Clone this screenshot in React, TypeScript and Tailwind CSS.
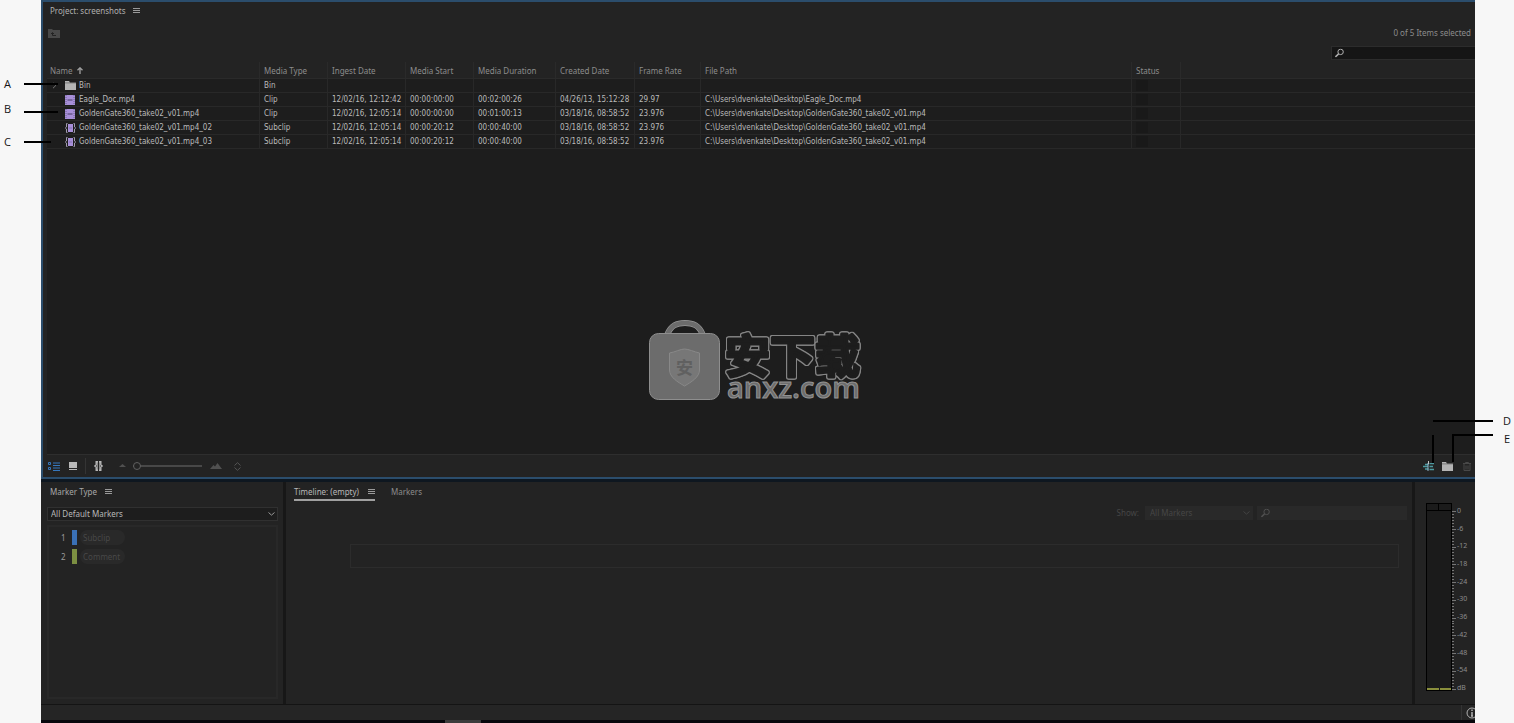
import type { ReactNode } from "react";
import clsx from "clsx";

type Kind = "bin" | "clip" | "subclip";

type Item = {
  kind: Kind;
  name: string;
  type: string;
  ingest?: string;
  start?: string;
  duration?: string;
  created?: string;
  rate?: string;
  path?: string;
};

const GATE_PATH = "C:\\Users\\dvenkate\\Desktop\\GoldenGate360_take02_v01.mp4";

const ITEMS: Item[] = [
  { kind: "bin", name: "Bin", type: "Bin" },
  { kind: "clip", name: "Eagle_Doc.mp4", type: "Clip", ingest: "12/02/16, 12:12:42", start: "00:00:00:00", duration: "00:02:00:26", created: "04/26/13, 15:12:28", rate: "29.97", path: "C:\\Users\\dvenkate\\Desktop\\Eagle_Doc.mp4" },
  { kind: "clip", name: "GoldenGate360_take02_v01.mp4", type: "Clip", ingest: "12/02/16, 12:05:14", start: "00:00:00:00", duration: "00:01:00:13", created: "03/18/16, 08:58:52", rate: "23.976", path: GATE_PATH },
  { kind: "subclip", name: "GoldenGate360_take02_v01.mp4_02", type: "Subclip", ingest: "12/02/16, 12:05:14", start: "00:00:20:12", duration: "00:00:40:00", created: "03/18/16, 08:58:52", rate: "23.976", path: GATE_PATH },
  { kind: "subclip", name: "GoldenGate360_take02_v01.mp4_03", type: "Subclip", ingest: "12/02/16, 12:05:14", start: "00:00:20:12", duration: "00:00:40:00", created: "03/18/16, 08:58:52", rate: "23.976", path: GATE_PATH },
];

const COLUMNS = ["Media Type", "Ingest Date", "Media Start", "Media Duration", "Created Date", "Frame Rate", "File Path", "Status"];

const LEVELS = ["0", "-6", "-12", "-18", "-24", "-30", "-36", "-42", "-48", "-54", "dB"];

const CELL = "h-[14px] border-b border-r border-[#282828] pl-1 whitespace-nowrap";

function MenuIcon() {
  return (
    <svg width="7" height="6" viewBox="0 0 7 6" stroke="#9a9a9a" shapeRendering="crispEdges">
      <path d="M0 .5h7M0 2.5h7M0 4.5h7" />
    </svg>
  );
}

function SearchIcon({ color }: { color: string }) {
  return (
    <svg width="9" height="9" viewBox="0 0 9 9" fill="none" stroke={color} className="pointer-events-none absolute left-1 top-1/2 -translate-y-1/2">
      <circle cx="5.6" cy="3.4" r="2.7" />
      <path d="M3.6 5.4.4 8.4" strokeWidth="1.5" />
    </svg>
  );
}

function ChevronIcon({ color }: { color: string }) {
  return (
    <svg width="7" height="5" viewBox="0 0 7 5" fill="none" stroke={color} className="pointer-events-none absolute right-[3px] top-1/2 -translate-y-1/2">
      <path d="m.5 1 3 2.6L6.5 1" />
    </svg>
  );
}

function FolderIcon({ color = "#b4b4b4" }: { color?: string }) {
  return (
    <svg width="11" height="9" viewBox="0 0 11 9" fill={color}>
      <path d="M0 0h4l1 1.5h6V9H0z" />
      <path d="M0 1.9h11" stroke="#1d1d1d" strokeWidth=".4" />
    </svg>
  );
}

function KindIcon({ kind }: { kind: Kind }) {
  if (kind === "bin") return <FolderIcon />;
  if (kind === "clip") {
    return (
      <svg width="10" height="10" viewBox="0 0 10 10">
        <path fill="#a78fd8" d="M0 0h10v10H0z" />
        <path stroke="#4b3f68" d="M2.5 5h5" />
        <path stroke="#6f5f96" strokeDasharray="1 1" d="M1 0v10M9 0v10" />
      </svg>
    );
  }
  return (
    <svg width="11" height="10" viewBox="0 0 11 10" fill="none">
      <path fill="#a78fd8" d="M3 1h5v8H3z" />
      <path stroke="#7a68a4" strokeWidth=".8" d="M4 5h3" />
      <path stroke="#a09aae" d="M2.5.5h-1V4L.3 5l1.2 1v3.5h1M8.5.5h1V4l1.2 1-1.2 1v3.5h-1" />
    </svg>
  );
}

function IconButton({ label, className, children }: { label: string; className?: string; children: ReactNode }) {
  return (
    <button type="button" aria-label={label} className={clsx("flex h-4 shrink-0 items-center justify-center", className)}>
      {children}
    </button>
  );
}

function ItemTable() {
  return (
    <table className="w-full table-fixed border-separate border-spacing-0 text-left leading-[13px]">
      <colgroup>
        <col className="w-[213px]" />
        <col className="w-[68px]" />
        <col className="w-[78px]" />
        <col className="w-[68px]" />
        <col className="w-[82px]" />
        <col className="w-[79px]" />
        <col className="w-[66px]" />
        <col className="w-[431px]" />
        <col className="w-[49px]" />
        <col />
      </colgroup>
      <thead className="bg-[#232323] font-['Noto_Sans',sans-serif] text-[#8c8c8c]">
        <tr>
          <th className="h-[17px] border-b border-r border-[#2a2a2a] pl-[3px] font-normal">
            <span className="flex items-center gap-1">
              Name
              <svg width="6" height="7" viewBox="0 0 6 7" fill="none" stroke="#a0a0a0" strokeWidth="1.3">
                <path d="M3 7V1M.5 3.2 3 .8l2.5 2.4" />
              </svg>
            </span>
          </th>
          {COLUMNS.map((c) => (
            <th key={c} className="h-[17px] border-b border-r border-[#2a2a2a] pl-1 font-normal whitespace-nowrap">{c}</th>
          ))}
          <th className="border-b border-[#2a2a2a]" />
        </tr>
      </thead>
      <tbody className="font-['DejaVu_Sans_Condensed','Noto_Sans',sans-serif] text-[#bababa]">
        {ITEMS.map((item) => (
          <tr key={item.name}>
            <td className={CELL}>
              <div className="flex items-center">
                <span className="w-[14px]">
                  {item.kind === "bin" && (
                    <svg width="5" height="7" viewBox="0 0 5 7" fill="none" stroke="#777" className="ml-px">
                      <path d="m1 .8 2.8 2.7L1 6.2" />
                    </svg>
                  )}
                </span>
                <span className="flex w-[14px] items-center">
                  <KindIcon kind={item.kind} />
                </span>
                {item.name}
              </div>
            </td>
            <td className={CELL}>{item.type}</td>
            <td className={CELL}>{item.ingest}</td>
            <td className={CELL}>{item.start}</td>
            <td className={CELL}>{item.duration}</td>
            <td className={CELL}>{item.created}</td>
            <td className={CELL}>{item.rate}</td>
            <td className={CELL}>{item.path}</td>
            <td className={CELL}>
              <div className="h-[11px] w-3 bg-[#191919]" />
            </td>
            <td className="border-b border-[#282828]" />
          </tr>
        ))}
      </tbody>
    </table>
  );
}

function Toolbar() {
  return (
    <div className="flex h-[22px] items-center pl-[5px]">
      <IconButton label="List view" className="w-3">
        <svg width="12" height="9" viewBox="0 0 12 9" fill="none" stroke="#3577bd">
          <path d="M.5.5h2v2h-2zM.5 5.5h2v2h-2z" />
          <path d="M5 1h7M5 3.5h7M5 6h7M5 8.5h7" />
        </svg>
      </IconButton>
      <IconButton label="Icon view" className="ml-[9px] w-2">
        <svg width="8" height="8" viewBox="0 0 8 8" fill="#b8b8b8">
          <path d="M0 0h8v6H0zM0 7h8v1H0z" />
        </svg>
      </IconButton>
      <span className="ml-2 h-4 w-px bg-[#343434]" />
      <IconButton label="Scrub" className="ml-2 w-[9px]">
        <svg width="9" height="10" viewBox="0 0 9 10" fill="none" stroke="#b8b8b8">
          <path strokeWidth="1.4" d="M3.9.7H2.2V4L.7 5l1.5 1v3.3h1.7M5.1.7h1.7V4l1.5 1-1.5 1v3.3H5.1" />
          <path d="M3.5 0v10M5.5 0v10" strokeWidth=".7" />
        </svg>
      </IconButton>
      <IconButton label="Smaller" className="ml-4 w-[7px]">
        <svg width="7" height="4" viewBox="0 0 7 4" fill="#505050"><path d="M0 3 3.5 0 7 3z" /></svg>
      </IconButton>
      <input
        type="range"
        aria-label="Thumbnail size"
        min={0}
        max={100}
        defaultValue={0}
        className="ml-[7px] h-2 w-[69px] appearance-none bg-transparent [&::-webkit-slider-runnable-track]:h-2 [&::-webkit-slider-runnable-track]:bg-[linear-gradient(#484848,#484848)] [&::-webkit-slider-runnable-track]:bg-[length:100%_2px] [&::-webkit-slider-runnable-track]:bg-center [&::-webkit-slider-runnable-track]:bg-no-repeat [&::-webkit-slider-thumb]:size-2 [&::-webkit-slider-thumb]:appearance-none [&::-webkit-slider-thumb]:rounded-full [&::-webkit-slider-thumb]:border [&::-webkit-slider-thumb]:border-[#606060] [&::-webkit-slider-thumb]:bg-[#232323]"
      />
      <IconButton label="Larger" className="ml-2 w-3">
        <svg width="12" height="6" viewBox="0 0 12 6" fill="#505050"><path d="m0 6 3.500-4 1.500 1.500L7.500 0 12 6z" /></svg>
      </IconButton>
      <IconButton label="Sort" className="ml-3 w-[7px]">
        <svg width="7" height="9" viewBox="0 0 7 9" fill="none" stroke="#555"><path d="M.5 3.500 3.500.7l3 2.800M.5 5.500l3 2.800 3-2.800" /></svg>
      </IconButton>

      <div className="ml-auto flex items-center">
        <IconButton label="Create subclip" className="w-3">
          <svg width="12" height="11" viewBox="0 0 12 11" fill="none">
            <path stroke="#4e9aa0" strokeWidth="1.300" d="M2 3.500h3.500M0 5.500h5M2 8h3.500M6.500 2.700H11M6.500 5.500H10M6.500 8.500H11" />
            <path stroke="#8fb3c8" d="M5 2v8" />
            <path stroke="#c4c4c4" d="M5.500 0v3" />
          </svg>
        </IconButton>
        <IconButton label="New bin" className="ml-[7px] w-[11px]"><FolderIcon /></IconButton>
        <IconButton label="Delete" className="mr-1 ml-[10px] w-2">
          <svg width="8" height="9" viewBox="0 0 8 9" fill="none" stroke="#484848">
            <path d="M0 1.500h8M2.500 1.500v-1h3v1M1 2v6.500h6V2M3 3.500v4M5 3.500v4" />
          </svg>
        </IconButton>
      </div>
    </div>
  );
}

function ProjectPanel() {
  return (
    <section className="flex flex-1 flex-col border-t-2 border-b-2 border-l-2 border-[#2b4d6c] bg-[#232323]">
      <header className="flex h-[18px] items-center gap-2 pl-[7px] text-[#b0b0b0]">
        <h1>Project: screenshots</h1>
        <IconButton label="Panel menu"><MenuIcon /></IconButton>
      </header>
      <div className="flex h-[26px] items-center justify-between pr-1 pl-[5px] text-[#8c8c8c]">
        <IconButton label="Parent bin">
          <svg width="12" height="9" viewBox="0 0 12 9" fill="none">
            <path fill="#494949" d="M0 0h4l1 1h7v8H0z" />
            <path stroke="#232323" d="M4.500 6.500V4M3 5l1.500-1.500L6 5M4.500 6.500H8" />
          </svg>
        </IconButton>
        <span>0 of 5 Items selected</span>
      </div>
      <div className="relative mb-0.5 h-[14px] w-[144px] self-end">
        <input type="search" aria-label="Search project" className="block h-full w-full border border-r-0 border-[#2c2c2c] bg-[#151515] pl-4 text-[#b0b0b0] outline-none" />
        <SearchIcon color="#b0b0b0" />
      </div>
      <div className="ml-1 flex-1 border-b border-[#2e2e2e] bg-[#1d1d1d]">
        <ItemTable />
      </div>
      <Toolbar />
    </section>
  );
}

function MarkerPanel() {
  return (
    <section className="flex w-[242px] flex-col pt-0.5 pr-[5px] pb-[5px] pl-[6px]">
      <header className="flex h-4 items-center gap-2 pl-[3px] text-[#a8a8a8]">
        <h2>Marker Type</h2>
        <IconButton label="Marker menu"><MenuIcon /></IconButton>
      </header>
      <div className="relative mt-[7px] h-[14px]">
        <select aria-label="Marker type" className="block h-full w-full appearance-none border border-[#303030] bg-[#1d1d1d] pl-[3px] leading-3 text-[#b8b8b8] outline-none">
          <option>All Default Markers</option>
        </select>
        <ChevronIcon color="#999" />
      </div>
      <ol className="mt-1 flex flex-1 flex-col gap-1 border-2 border-[#282828] pt-[3px] pl-3 text-[#9a9a9a]">
        <li className="flex h-[15px] items-center gap-[3px]">
          <span className="w-2">1</span>
          <span className="h-full w-[5px] bg-[#3a70b5]" />
          <span className="h-full w-[45px] rounded-full bg-[#292929] pl-[3px] leading-[15px] text-[#484848]">Subclip</span>
        </li>
        <li className="flex h-[15px] items-center gap-[3px]">
          <span className="w-2">2</span>
          <span className="h-full w-[5px] bg-[#7c8f42]" />
          <span className="h-full w-[45px] rounded-full bg-[#292929] pl-[3px] leading-[15px] text-[#484848]">Comment</span>
        </li>
      </ol>
    </section>
  );
}

function TimelinePanel() {
  return (
    <section className="flex-1 border-x-[3px] border-[#171717] pt-0.5 pr-[5px] pl-[8px]">
      <div className="flex h-[17px] items-start gap-4 text-[#8c8c8c]">
        <div className="flex h-full items-center gap-[9px] border-b-2 border-[#a0a0a0] text-[#b8b8b8]">
          <button type="button">Timeline: (empty)</button>
          <MenuIcon />
        </div>
        <button type="button" className="h-[15px]">Markers</button>
      </div>
      <div className="mt-[5px] flex h-[14px] items-center justify-end text-[#464646]">
        <label htmlFor="show" className="mr-[6px]">Show:</label>
        <div className="relative mr-1 h-full w-[108px]">
          <select id="show" disabled className="block h-full w-full appearance-none bg-[#292929] pl-[5px]">
            <option>All Markers</option>
          </select>
          <ChevronIcon color="#444" />
        </div>
        <div className="relative h-full w-[150px]">
          <input type="search" disabled aria-label="Search markers" className="block h-full w-full bg-[#292929] pl-4" />
          <SearchIcon color="#505050" />
        </div>
      </div>
      <div className="mt-6 mr-2 ml-14 h-6 border border-[#2c2c2c]" />
    </section>
  );
}

function MeterPanel() {
  return (
    <section className="flex w-[60px] pt-[21px] pl-[11px] text-[#8c8c8c]">
      <div className="flex h-[188px] w-[26px] shrink-0 flex-col border border-black bg-[#1b1b1b]">
        <div className="flex h-[7px] border-b border-black">
          <span className="w-1/2 border-r border-black" />
        </div>
        <div className="mt-auto flex h-0.5 gap-px">
          <span className="flex-1 bg-[#8a8f3c]" />
          <span className="flex-1 bg-[#8a8f3c]" />
        </div>
      </div>
      <svg width="4" height="190" viewBox="0 0 4 190" stroke="#757575" shapeRendering="crispEdges" className="shrink-0">
        {Array.from({ length: 61 }, (_, i) => (
          <path key={i} d={`M0 ${8.5 + i * 2.96}h${i % 6 === 0 ? 4 : 2}`} />
        ))}
      </svg>
      <ul className="flex h-[192px] flex-col justify-between pt-px pl-px text-[7px]">
        {LEVELS.map((l) => (
          <li key={l} className="leading-[14px]">{l}</li>
        ))}
      </ul>
    </section>
  );
}

function Watermark() {
  return (
    <div className="pointer-events-none absolute inset-0 flex items-center justify-center">
      <svg width="216" height="84" viewBox="0 0 216 84" fill="none" className="overflow-visible">
        <path d="M18 15C22 5 28 3 36 3s14 2 18 12" stroke="#9a9a9a" strokeWidth="6" />
        <path d="M18 15C22 5 28 3 36 3s14 2 18 12" stroke="#6c6c6c" strokeWidth="4.500" />
        <rect x=".5" y="13.500" width="70" height="66" rx="9" fill="#6c6c6c" stroke="#8e8e8e" />
        <path d="M20.500 33c6-1 11-4 15-4s10 3 15 4v17c0 7-8 12-15 16-7-4-15-9-15-16z" fill="#777" stroke="#888" />
        <text x="35.500" y="54" textAnchor="middle" fontSize="17" fontWeight="700" fill="#606060" fontFamily="'Noto Sans CJK SC', sans-serif">安</text>
        <text
          x="76"
          y="53"
          fontFamily="'Noto Sans CJK SC', sans-serif"
          fontSize="45"
          fontWeight="700"
          fill="#1d1d1d"
          stroke="#1d1d1d"
          strokeWidth="3"
          strokeLinejoin="round"
          className="[filter:drop-shadow(1px_0_0_#858585)_drop-shadow(-1px_0_0_#858585)_drop-shadow(0_1px_0_#858585)_drop-shadow(0_-1px_0_#858585)]"
        >
          安下载
        </text>
        <text x="78" y="78" fontFamily="'Open Sans', sans-serif" fontSize="29" fontWeight="600" fill="#6c6c6c" stroke="#929292" strokeWidth="1">anxz.com</text>
      </svg>
    </div>
  );
}

function Callouts() {
  return (
    <div className="pointer-events-none absolute inset-0 font-['Open_Sans',sans-serif] text-[11px] leading-4 text-[#151515]">
      <span className="absolute top-[76px] left-1">A</span>
      <span className="absolute top-[83px] left-6 h-0.5 w-[34px] bg-black" />
      <span className="absolute top-[101px] left-1">B</span>
      <span className="absolute top-[111px] left-6 h-0.5 w-[34px] bg-black" />
      <span className="absolute top-[134px] left-1">C</span>
      <span className="absolute top-[141px] left-6 h-0.5 w-[27px] bg-black" />

      <span className="absolute right-[3px] bottom-[294px]">D</span>
      <span className="absolute right-[21px] bottom-[301px] h-0.5 w-[60px] bg-black" />
      <span className="absolute right-[80px] bottom-[260px] h-7 w-0.5 bg-black" />
      <span className="absolute right-1 bottom-[276px]">E</span>
      <span className="absolute right-[21px] bottom-[261px] h-7 w-[41px] border-t-2 border-l-2 border-black" />
    </div>
  );
}

export default function App() {
  return (
    <div className="relative flex min-h-screen bg-[#f7f7f7] pr-[39px] pl-[41px] font-['Noto_Sans',sans-serif] text-[8px]">
      <main className="flex min-w-0 flex-1 flex-col overflow-hidden bg-[#232323]">
        <ProjectPanel />
        <div className="h-[3px] bg-[#0e1720]" />
        <div className="flex h-[222px]">
          <MarkerPanel />
          <TimelinePanel />
          <MeterPanel />
        </div>
        <footer className="flex h-4 justify-end border-t border-[#141414] bg-[#252525]">
          <div className="flex w-[14px] items-center border-l border-[#343434] pl-1">
            <svg width="12" height="12" viewBox="0 0 12 12" fill="none" stroke="#b0b0b0" className="shrink-0">
              <circle cx="6" cy="6" r="5" />
              <path strokeWidth="1.500" d="M6 2.500V4M6 5v4M5 9h2" />
            </svg>
          </div>
        </footer>
        <div className="h-[3px] bg-[#07070c] pl-[404px]">
          <div className="h-full w-9 bg-[#3c3c3c]" />
        </div>
      </main>
      <Watermark />
      <Callouts />
    </div>
  );
}
